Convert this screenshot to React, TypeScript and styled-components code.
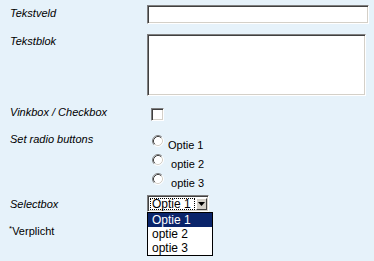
import React from 'react';
import styled, { createGlobalStyle } from 'styled-components';

const GlobalStyle = createGlobalStyle`
  html, body {
    margin: 0;
    padding: 0;
    background: #e6f2fa;
  }
  body {
    font-family: "Liberation Sans", Arial, sans-serif;
    color: #000;
  }
`;

const Page = styled.form`
  width: 374px;
  height: 261px;
  padding: 5px 0 0 10px;
  box-sizing: border-box;
  overflow: hidden;
`;

const Row = styled.div<{ $gap: number }>`
  display: grid;
  grid-template-columns: 137px 1fr;
  margin-top: ${(p) => p.$gap}px;
`;

const Label = styled.div<{ $pt: number }>`
  padding-top: ${(p) => p.$pt}px;
  font-size: 11px;
  line-height: 13px;
  font-style: italic;
`;

// classic windows inset edges
const inset = `
  border-style: solid;
  border-width: 1px;
  border-color: #808080 #ffffff #ffffff #808080;
  box-shadow: inset 1px 1px 0 #404040, inset -1px -1px 0 #d4d0c8;
  box-sizing: border-box;
  background: #fff;
`;

const TextInput = styled.div`
  ${inset}
  width: 222px;
  height: 19px;
`;

const TextArea = styled.div`
  ${inset}
  width: 219px;
  height: 62px;
`;

const Checkbox = styled.div`
  ${inset}
  width: 13px;
  height: 13px;
  margin: 3px 0 0 4px;
`;

const RadioList = styled.div`
  display: flex;
  flex-direction: column;
  padding: 3px 0 0 5px;
`;

const RadioRow = styled.div`
  display: flex;
  align-items: flex-start;
  height: 19px;
`;

const RadioText = styled.span`
  font-size: 11px;
  line-height: 13px;
  padding: 4px 0 0 4px;
  white-space: pre;
`;

const SelectWrap = styled.div`
  position: relative;
  width: 62px;
`;

const SelectBox = styled.div`
  ${inset}
  display: flex;
  align-items: stretch;
  width: 62px;
  height: 17px;
  padding: 2px 1px 1px 2px;
`;

const SelectValue = styled.div`
  flex: 1;
  border: 1px dotted #000;
  font-size: 12px;
  line-height: 11px;
  padding-left: 1px;
  white-space: nowrap;
`;

const SelectButton = styled.div`
  width: 11px;
  margin-left: 1px;
  background: #d4d0c8;
  border-style: solid;
  border-width: 1px;
  border-color: #fff #404040 #404040 #fff;
  box-sizing: border-box;
  display: flex;
  align-items: center;
  justify-content: center;
`;

const DropList = styled.div`
  position: absolute;
  top: 100%;
  left: 0;
  width: 66px;
  border: 1px solid #000;
  background: #fff;
  box-sizing: border-box;
`;

const DropItem = styled.div<{ $active?: boolean }>`
  height: 14px;
  font-size: 12px;
  line-height: 14px;
  padding-left: 4px;
  background: ${(p) => (p.$active ? '#0a246a' : '#fff')};
  color: ${(p) => (p.$active ? '#fff' : '#000')};
`;

const Note = styled.div`
  margin-top: 13px;
  margin-left: -1px;
  font-size: 11px;
  line-height: 13px;
`;

const Star = styled.span`
  font-size: 8px;
  vertical-align: 4px;
  line-height: 0;
`;

const Radio: React.FC = () => (
  <svg width="12" height="12" viewBox="0 0 12 12">
    <circle cx="6" cy="6" r="5" fill="#fff" />
    <path d="M2.11 9.89 A5.5 5.5 0 0 1 9.89 2.11" fill="none" stroke="#808080" />
    <path d="M9.89 2.11 A5.5 5.5 0 0 1 2.11 9.89" fill="none" stroke="#ffffff" />
    <path d="M2.82 9.18 A4.5 4.5 0 0 1 9.18 2.82" fill="none" stroke="#404040" />
    <path d="M9.18 2.82 A4.5 4.5 0 0 1 2.82 9.18" fill="none" stroke="#d4d0c8" />
  </svg>
);

const options = ['Optie 1', ' optie 2', ' optie 3'];

export default function App() {
  return (
    <>
      <GlobalStyle />
      <Page>
        <Row $gap={0}>
          <Label $pt={2}>Tekstveld</Label>
          <TextInput />
        </Row>
        <Row $gap={10}>
          <Label $pt={1}>Tekstblok</Label>
          <TextArea />
        </Row>
        <Row $gap={9}>
          <Label $pt={1}>Vinkbox / Checkbox</Label>
          <Checkbox />
        </Row>
        <Row $gap={11}>
          <Label $pt={1}>Set radio buttons</Label>
          <RadioList>
            {options.map((o) => (
              <RadioRow key={o}>
                <Radio />
                <RadioText>{o}</RadioText>
              </RadioRow>
            ))}
          </RadioList>
        </Row>
        <Row $gap={3}>
          <Label $pt={3}>Selectbox</Label>
          <SelectWrap>
            <SelectBox>
              <SelectValue>Optie 1</SelectValue>
              <SelectButton>
                <svg width="7" height="4" viewBox="0 0 7 4">
                  <path d="M0 0 H7 L3.5 4 Z" fill="#000" />
                </svg>
              </SelectButton>
            </SelectBox>
            <DropList>
              <DropItem $active>Optie 1</DropItem>
              <DropItem>optie 2</DropItem>
              <DropItem>optie 3</DropItem>
            </DropList>
          </SelectWrap>
        </Row>
        <Note>
          <Star>*</Star>Verplicht
        </Note>
      </Page>
    </>
  );
}
